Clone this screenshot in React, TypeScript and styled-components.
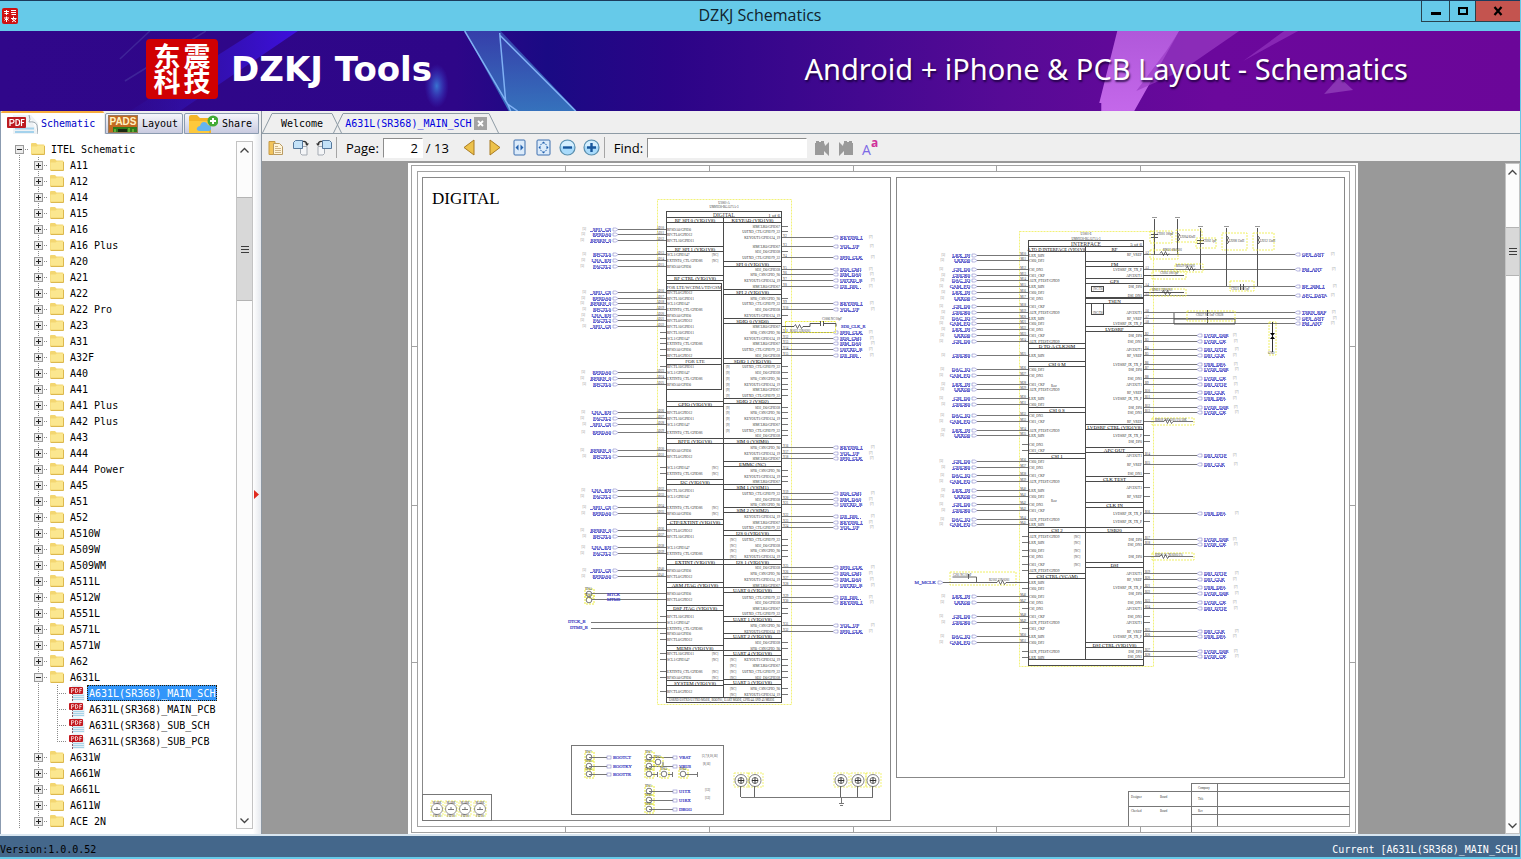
import React, { useState } from "react";
import styled, { createGlobalStyle, css } from "styled-components";

const mono = `"DejaVu Sans Mono", "Liberation Mono", monospace`;
const ui = `"Open Sans", "Noto Sans", sans-serif`;

const GlobalStyle = createGlobalStyle`
  * { box-sizing: border-box; }
  body { margin: 0; font-family: ${mono}; font-size: 10px; color: #000; background: #66cae9; }
  button { font: inherit; color: inherit; padding: 0; margin: 0; border: 0; background: none; cursor: default; }
  svg { display: block; flex: none; }
`;

/* ---------- window frame ---------- */

const Window = styled.div`
  display: flex;
  flex-direction: column;
  height: 100vh;
  border-right: 1px solid #66cae9;
  border-bottom: 2px solid #66cae9;
  overflow: hidden;
`;

const TitleBar = styled.header`
  display: grid;
  grid-template-columns: 1fr auto 1fr;
  flex: none;
  height: 31px;
  border-top: 1px solid #1b3b5c;
  background: #66cae9;
`;

const AppIcon = styled.div`
  align-self: center;
  width: 16px;
  height: 16px;
  margin-left: 2px;
`;

const Title = styled.h1`
  margin: 0;
  font: 400 16px/29px ${ui};
  color: #10222c;
`;

const WindowButtons = styled.div`
  display: flex;
  justify-self: end;
  height: 21px;
`;

const WindowButton = styled.button<{ $w: number; $close?: boolean }>`
  display: grid;
  place-items: center;
  width: ${(p) => p.$w}px;
  height: 21px;
  border: 1px solid #28414c;
  border-top: 0;
  border-right: 0;
  background: ${(p) => (p.$close ? "#c4544f" : "transparent")};
`;

/* ---------- banner ---------- */

const Banner = styled.div`
  display: grid;
  flex: none;
  height: 80px;
  background: linear-gradient(90deg, #30078a 0%, #2e0688 30%, #1a0a84 36%, #2b0487 44%, #3a078d 52%, #560a96 66%, #6b089c 80%, #6b0699 100%);
  overflow: hidden;
  > * { grid-area: 1 / 1; }
  > svg { width: 100%; height: 80px; }
`;

const BannerContent = styled.div`
  display: flex;
  align-items: center;
  justify-content: space-between;
  padding: 0 112px 4px 146px;
`;

const Brand = styled.div`
  display: flex;
  align-items: center;
  gap: 13px;
  color: #fff;
  font: 700 34px/40px "DejaVu Sans", sans-serif;
`;

const Seal = styled.div`
  display: grid;
  grid-template-columns: 30px 30px;
  align-content: center;
  justify-content: center;
  width: 72px;
  height: 60px;
  padding-bottom: 2px;
  border-radius: 4px;
  background: #d00002;
  font: 700 27px/25px "Noto Sans CJK SC", sans-serif;
  text-align: center;
`;

const Slogan = styled.p`
  margin: 0;
  color: #fff;
  font: 400 29px/36px "Noto Sans", sans-serif;
  text-shadow: 1px 2px 2px rgba(20, 0, 50, 0.8);
  white-space: nowrap;
`;

/* ---------- body columns ---------- */

const Body = styled.main`
  display: flex;
  flex: 1;
  min-height: 0;
  background: #efefef;
`;

const Sidebar = styled.aside`
  display: flex;
  flex: none;
  flex-direction: column;
  width: 253px;
  border-left: 1px solid #8b9bb0;
  background: #fff;
`;

const SideTabs = styled.nav`
  display: flex;
  flex: none;
  align-items: flex-end;
  gap: 1px;
  width: 260px;
  height: 23px;
  background: #efefef;
  z-index: 1;
`;

const SideTab = styled.button<{ $active?: boolean; $w: number }>`
  display: flex;
  align-items: center;
  gap: 4px;
  width: ${(p) => p.$w}px;
  height: 21px;
  padding-left: 2px;
  border: 1px solid #8b9bb0;
  border-radius: 2px 2px 0 0;
  background: linear-gradient(#f6f6fb, #c9cbe0);
  ${(p) =>
    p.$active &&
    css`
      height: 23px;
      border: 0;
      border-top: 2px solid #f6ab3c;
      background: #fff;
      color: #0000c8;
      padding-left: 6px;
      gap: 3px;
    `}
`;

const TreePane = styled.div`
  display: flex;
  flex: 1;
  min-height: 0;
  padding: 7px 0 5px 0;
`;

const Tree = styled.ul`
  flex: 1;
  min-width: 0;
  margin: 0;
  padding: 0 0 0 9px;
  list-style: none;
  overflow: hidden;
`;

const TreeRow = styled.li`
  display: flex;
  align-items: center;
  height: 16px;
  white-space: nowrap;
`;

const dotsV = "repeating-linear-gradient(180deg, #8a8a8a 0 1px, transparent 1px 2px)";
const dotsH = "repeating-linear-gradient(90deg, #8a8a8a 0 1px, transparent 1px 2px)";

const Guide = styled.span<{ $line?: boolean; $branch?: boolean; $half?: "top" | "bottom" }>`
  display: grid;
  place-items: center;
  flex: none;
  width: 19px;
  height: 16px;
  background-image: ${(p) => (p.$line ? dotsV : "none")}, ${(p) => (p.$branch ? dotsH : "none")};
  background-size: 1px ${(p) => (p.$half ? "8px" : "16px")}, 10px 1px;
  background-position: 9px ${(p) => (p.$half === "bottom" ? "8px" : "0")}, 9px 8px;
  background-repeat: no-repeat;
`;

const Expander = styled.button`
  width: 9px;
  height: 9px;
  background: #f0f0f0;
`;

const NodeIcon = styled.span`
  flex: none;
  width: 18px;
  height: 16px;
  padding-left: 2px;
  svg { overflow: visible; }
`;

const NodeLabel = styled.button<{ $selected?: boolean }>`
  height: 16px;
  margin-left: 2px;
  padding: 1px 1px 0;
  border: 1px dotted ${(p) => (p.$selected ? "#2b1b00" : "transparent")};
  background: ${(p) => (p.$selected ? "#3296fa" : "transparent")};
  color: ${(p) => (p.$selected ? "#fff" : "#000")};
  line-height: 13px;
`;

const ScrollTrack = styled.div<{ $w: number }>`
  display: flex;
  flex: none;
  flex-direction: column;
  width: ${(p) => p.$w}px;
  border: 1px solid #c3c3c3;
  background: #fcfcfc;
`;

const ScrollArrow = styled.button`
  display: grid;
  place-items: center;
  flex: none;
  height: 15px;
`;

const ScrollThumb = styled.div<{ $top: number; $h: number }>`
  display: grid;
  place-items: center;
  flex: none;
  height: ${(p) => p.$h}px;
  margin-top: ${(p) => p.$top}px;
  border: 1px solid #b4b4b4;
  border-width: 1px 0;
  background: #d8d8d8;
`;

const Spacer = styled.div`
  flex: 1;
`;

const Splitter = styled.div`
  display: flex;
  align-items: center;
  flex: none;
  width: 9px;
  padding: 44px 0 0 1px;
  border-right: 1px solid #8e98a2;
  background: linear-gradient(90deg, #fff, #e6e9ee);
`;

const Workspace = styled.section`
  display: flex;
  flex: 1;
  flex-direction: column;
  min-width: 0;
`;

const DocTabs = styled.nav`
  display: flex;
  align-items: flex-end;
  flex: none;
  height: 23px;
  border-bottom: 1px solid #8e9ba5;
`;

const DocTab = styled.button<{ $active?: boolean }>`
  display: flex;
  align-items: flex-end;
  height: 20px;
  margin-right: -9px;
  color: ${(p) => (p.$active ? "#0000e0" : "#000")};
`;

const DocTabFace = styled.span<{ $pad: number }>`
  display: flex;
  align-items: center;
  gap: 2px;
  height: 20px;
  padding: 0 ${(p) => p.$pad}px;
  border-top: 1px solid #8e9ba5;
`;

const Toolbar = styled.div`
  display: flex;
  align-items: center;
  flex: none;
  height: 29px;
  padding-left: 2px;
  border-bottom: 2px solid #999;
  font: 400 13px/20px ${ui};
`;

const Tool = styled.button`
  display: grid;
  place-items: center;
  width: 24px;
  height: 24px;
`;

const WideTool = styled(Tool)`
  width: 26px;
`;

const Divider = styled.span`
  width: 1px;
  height: 21px;
  margin-right: 9px;
  background: #a5a5a5;
`;

const Field = styled.input<{ $w: number }>`
  width: ${(p) => p.$w}px;
  height: 20px;
  margin: 0 3px 0 4px;
  padding: 0 4px;
  border: 1px solid #8d8d8d;
  border-right-color: #fff;
  border-bottom-color: #fff;
  background: #fff;
  font: inherit;
  text-align: ${(p) => (p.$w < 60 ? "right" : "left")};
  outline: none;
`;

const PageCount = styled.span`
  width: 30px;
`;

const Viewer = styled.div`
  display: flex;
  flex: 1;
  min-height: 0;
  background: #999;
`;

const PageArea = styled.div`
  display: flex;
  justify-content: center;
  flex: 1;
  min-width: 0;
  padding-right: 2px;
  overflow: hidden;
`;

const StatusBar = styled.footer`
  display: flex;
  align-items: flex-end;
  justify-content: space-between;
  flex: none;
  height: 23px;
  padding-right: 1px;
  border-top: 2px solid #d9e6f0;
  background: #44678b;
  line-height: 15px;
`;

const StatusRight = styled.span`
  color: #fff;
`;

/* ---------- icons ---------- */

const SealIcon = () => (
  <svg width="16" height="16" viewBox="0 0 16 16">
    <rect width="16" height="16" rx="2" fill="#cf1111" />
    <path d="M2 3.500h5M4.500 2v5M2.500 5.500h4M9 2.500h5M9 4.500h5M9.500 6.500h4.500M2 10h5M4.500 8.500v5.500M2.500 12.500l2-2 2 2M9 10.500h5.500M11.500 8.500v3M10 14l4-3M10 11l4 3" stroke="#fff" strokeWidth="1" fill="none" />
  </svg>
);

const FolderIcon = () => (
  <svg width="14" height="16" viewBox="0 0 14 16">
    <path d="M0 3q0-1 1-1h4l1.500 1.500H12.500q1 0 1 1V13H0z" fill="#f3d671" />
    <path d="M.5 12.500V5.500H5.500L7 4.500h6.500v8z" fill="#fbe78f" />
    <path d="M.5 13.500H13.500V5" stroke="#dcb84e" fill="none" />
  </svg>
);

const PdfIcon = () => (
  <svg width="16" height="16" viewBox="0 0 16 16">
    <path d="M3 .5h8.500L15.500 5v10.500H3z" fill="#e4eef4" />
    <path d="M4 10.500h11M4 12.500h11M4 14.500h11" stroke="#a7d3e8" />
    <path d="M3.500 8v8" stroke="#8c5a66" strokeDasharray="2 1" />
    <rect x="0" y="2" width="14" height="7" rx="1" fill="#c3191f" />
    <path d="M2.500 8V3.500h1.200q1.200 0 1.200 1.100T3.700 5.800H2.500M6.500 3.500V7.500h.8q1.500 0 1.500-2t-1.500-2zM10.800 8V3.500h2.200M10.800 5.500h1.700" stroke="#f6d5d5" strokeWidth=".9" fill="none" />
  </svg>
);

const PdfLarge = () => (
  <svg width="31" height="20" viewBox="0 0 31 20">
    <path d="M6 1h18l7 8v11H6z" fill="#eef2f5" />
    <path d="M22 1q2 5 0 7q6-1 8 3l1 9" fill="#fafcfd" stroke="#9aa5ad" />
    <path d="M8 14.500h19M8 18h19" stroke="#a4d2ec" strokeWidth="2" />
    <rect x="0" y="3" width="19" height="11" rx="1" fill="#bd1a20" />
    <path d="M3 12V5.500h2q2 0 2 1.800T5 9.200H3M9 5.500V11.500h1.200q2.500 0 2.500-3t-2.500-3zM14.500 12V5.500h3M14.500 8.500h2.500" stroke="#fff" strokeWidth="1.200" fill="none" />
  </svg>
);

const PadsBadge = styled.span`
  display: flex;
  flex-direction: column;
  width: 30px;
  height: 18px;
  border: 1px solid #9a7a5a;
  background: #c46a22;
  color: #fff3c4;
  font: 700 10px/11px "Liberation Sans", sans-serif;
  text-align: center;
  overflow: hidden;
`;

const PadsIcon = () => (
  <PadsBadge>
    PADS
    <svg width="28" height="7" viewBox="0 0 28 7">
      <rect width="28" height="7" fill="#2f7a1c" />
      <path d="M0 0h4v7H0z" fill="#c46a22" />
      <path d="M9 2h9v5H9z" fill="#1c2a12" />
      <path d="M20 1v5M24 2v4M6 2v4" stroke="#8fe04a" />
    </svg>
  </PadsBadge>
);

const ShareIcon = () => (
  <svg width="31" height="18" viewBox="0 0 31 18">
    <path d="M2 2q0-2 2-2h6l3 3h9q2 0 2 2v13H2z" fill="#f4b427" />
    <path d="M2 6h20v12H2z" fill="#fdc93c" />
    <path d="M12 16q-3-1-2-3t3-2q1-4 4-4t4 3q3 0 3 3t-2 3z" fill="#64b4ee" />
    <circle cx="26" cy="6" r="5.500" fill="#43ab36" />
    <path d="M26 3v6M23 6h6" stroke="#fff" strokeWidth="2" />
  </svg>
);

const Chevron = ({ up }: { up?: boolean }) => (
  <svg width="9" height="6" viewBox="0 0 9 6">
    <path d={up ? "M.5 5.500L4.500 1.500 8.500 5.500" : "M.5 .5L4.500 4.500 8.500 .5"} stroke="#444" strokeWidth="1.300" fill="none" />
  </svg>
);

const Grip = () => (
  <svg width="8" height="7" viewBox="0 0 8 7">
    <path d="M0 .5h8M0 3.500h8M0 6.500h8" stroke="#3c3c3c" />
  </svg>
);

const CopyIcon = () => (
  <svg width="16" height="16" viewBox="0 0 16 16">
    <path d="M1 1.500h6v13H1z" fill="#f2c45c" stroke="#c69a46" />
    <path d="M5.500 3.500h6l3 3v8h-9z" fill="#fff5da" stroke="#b99a62" />
    <path d="M7 8.500h6M7 10.500h6M7 12.500h6M7 6.500h3" stroke="#ceb488" />
  </svg>
);

const RotateIcon = ({ flip }: { flip?: boolean }) => (
  <svg width="17" height="17" viewBox="0 0 17 17">
    <g transform={flip ? "matrix(-1 0 0 1 17 0)" : undefined}>
      <path d="M8.500 7.500h6.500v8.500H10l-1.500-1.500z" fill="#f4f5f7" stroke="#a5abb3" />
      <path d="M1.500 3.500l2-2h7v8h-9z" fill="#c4e2f8" stroke="#56789c" />
      <path d="M11 2.500q3.500-.5 4 3" stroke="#333" strokeWidth="1.200" fill="none" />
      <path d="M13 4.500h4l-2 2.500z" fill="#333" />
    </g>
  </svg>
);

const ArrowIcon = ({ right }: { right?: boolean }) => (
  <svg width="12" height="17" viewBox="0 0 12 17">
    <path d={right ? "M1 1L11 8.500 1 16z" : "M11 1L1 8.500 11 16z"} fill="#edc24c" stroke="#a97b22" />
  </svg>
);

const FitIcon = ({ full }: { full?: boolean }) => (
  <svg width="15" height="17" viewBox="0 0 15 17">
    <rect x={full ? 1 : 2} y="1" width={full ? 13 : 11} height="15" rx="1" fill="#dcebfa" stroke="#3d6fae" />
    {!full && <path d="M6.500 5.500L3.500 8.500l3 3zM8.500 5.500l3 3-3 3z" fill="#2462ae" />}
    {full && <path d="M5.500 4.500h4l-2-2zM5.500 12.500h4l-2 2zM4.500 6.500v4l-2-2zM10.500 6.500v4l2-2z" fill="#2462ae" />}
    {full && <path d="M4.500 5.500h1M9.500 5.500h1M4.500 11.500h1M9.500 11.500h1" stroke="#2462ae" />}
  </svg>
);

const ZoomIcon = ({ plus }: { plus?: boolean }) => (
  <svg width="17" height="17" viewBox="0 0 17 17">
    <circle cx="8.500" cy="8.500" r="7.500" fill="#a9dbfb" stroke="#5a8fae" strokeWidth="1.200" />
    <path d="M2 7q1-5 6.500-5T15 7q-6 3-13 0" fill="#d5effe" />
    <path d={plus ? "M4 8.500h9M8.500 4v9" : "M4 8.500h9"} stroke="#17579c" strokeWidth="2.400" />
  </svg>
);

const FindIcon = ({ next }: { next?: boolean }) => (
  <svg width="16" height="16" viewBox="0 0 16 16">
    <path d="M1 3h1V1h3v1h2V1h3v2q1 1 1 3l4-4v14l-5-5v4H1z" fill="#9a9a9a" transform={next ? "matrix(-1 0 0 1 16 0)" : undefined} />
  </svg>
);

const CaseMark = styled.span`
  display: flex;
  height: 18px;
  color: #7d6ae6;
  font: 400 14px/21px "Open Sans", sans-serif;
  sup { color: #d0309a; font: 700 12px/8px "Open Sans", sans-serif; }
`;

const CloseMark = () => (
  <svg width="13" height="13" viewBox="0 0 13 13">
    <rect width="13" height="13" fill="#a3a3a3" />
    <path d="M4 4l5 5M9 4l-5 5" stroke="#fff" strokeWidth="1.800" />
  </svg>
);

const Slant = ({ down }: { down?: boolean }) => (
  <svg width="10" height="20" viewBox="0 0 10 20">
    <path d={down ? "M0 .5L9.500 20" : "M.5 20L10 .5"} stroke="#8e9ba5" fill="none" />
  </svg>
);

const BannerArt = () => (
  <svg viewBox="0 0 1521 80" preserveAspectRatio="none" aria-hidden="true">
    <defs>
      <linearGradient id="beam" x1="0" x2="1">
        <stop offset="0" stopColor="#2c1fbd" stopOpacity=".1" />
        <stop offset="1" stopColor="#4010e8" stopOpacity=".9" />
      </linearGradient>
      <linearGradient id="shard" x1="0" x2="0" y1="0" y2="1">
        <stop offset="0" stopColor="#3848b0" />
        <stop offset="1" stopColor="#3a84c6" />
      </linearGradient>
      <linearGradient id="pink" x1="0" x2="0" y1="0" y2="1">
        <stop offset="0" stopColor="#b058da" />
        <stop offset="1" stopColor="#c468ea" />
      </linearGradient>
      <radialGradient id="glow">
        <stop offset="0" stopColor="#3a80d8" stopOpacity=".9" />
        <stop offset="1" stopColor="#3a40d8" stopOpacity="0" />
      </radialGradient>
    </defs>
    <path d="M256 0h42L180 80H130z" fill="url(#beam)" />
    <path d="M206 0L125 50M150 0l-30 28" stroke="#5b5ab4" strokeWidth="1.500" opacity=".35" />
    <ellipse cx="437" cy="55" rx="12" ry="22" fill="url(#glow)" />
    <path d="M465 0h36l76 80h-68z" fill="url(#shard)" opacity=".85" />
    <path d="M465 0l43 73 3 7M500 4l76 76M500 2l6 68M508 73l10 7" stroke="#7fb0f4" strokeWidth="1.500" fill="none" />
    <path d="M1118 0h62l-45 80h-33v-8h-2z" fill="url(#pink)" />
    <path d="M1180 0h60l-58 40-45 20 30-40z" fill="#9a3cc4" opacity=".7" />
    <path d="M1285 0h14l-55 30z" fill="#9a3cc4" opacity=".6" />
    <path d="M1340 46l14 13-29 4z" fill="#8a34b4" />
  </svg>
);

/* ---------- schematic sheet ---------- */

const INK = "#4a4a4a";
const BLUE = "#3f3fc4";
const YEL = "#ecec3c";

type Header = [number, string];

interface Wire {
  y: number;
  name: string;
}

const Tiny = ({ x, y, children, fill = "#333", size = 4, end, mid }: { x: number; y: number; children: React.ReactNode; fill?: string; size?: number; end?: boolean; mid?: boolean }) => (
  <text x={x} y={y} fill={fill} fontSize={size} textAnchor={end ? "end" : mid ? "middle" : "start"} stroke={fill === BLUE ? BLUE : undefined} strokeWidth=".2">
    {children}
  </text>
);

const wires = (names: string, ys: number[]): Wire[] => {
  const list = names.split(" ");
  return ys.map((y, i) => ({ y, name: list[i % list.length] }));
};

const LeftWires = ({ items, edge, tip, pins }: { items: Wire[]; edge: number; tip: number; pins: string }) => (
  <g>
    {items.map(({ y, name }, i) => (
      <g key={y}>
        <path d={`M${edge} ${y + 0.5}H${tip}`} stroke="#777" />
        <path d={`M${tip - 5} ${y - 1}h3l2 1.500-2 1.500h-3z`} fill="#fff" stroke="#8888cc" strokeWidth=".6" />
        <Tiny x={tip - 7} y={y + 2} fill={BLUE} size={5} end>{name}</Tiny>
        <path d={`M${tip - 7 - name.length * 3} ${y + 2.5}H${tip - 7}`} stroke={BLUE} strokeWidth=".8" strokeDasharray="3 1" />
        <Tiny x={tip - 32 - (i % 3)} y={y + 1} fill="#777" size={3} end>[5]</Tiny>
      </g>
    ))}
    {items.map(({ y }, i) => (
      <Tiny key={y} x={edge - 2} y={y} size={3} end>{pins + (10 + i)}</Tiny>
    ))}
  </g>
);

const RightWires = ({ items, edge, tip, pins }: { items: Wire[]; edge: number; tip: number; pins: string }) => (
  <g>
    {items.map(({ y, name }, i) => (
      <g key={y}>
        <path d={`M${edge} ${y + 0.5}H${tip}`} stroke="#777" />
        <path d={`M${tip + 5} ${y - 1}h-3l-2 1.500 2 1.500h3z`} fill="#fff" stroke="#8888cc" strokeWidth=".6" />
        <Tiny x={tip + 7} y={y + 2} fill={BLUE} size={5}>{name}</Tiny>
        <path d={`M${tip + 7} ${y + 2.5}h${name.length * 3}`} stroke={BLUE} strokeWidth=".8" strokeDasharray="3 1" />
        <Tiny x={tip + 36 + (i % 3)} y={y + 1} fill="#777" size={3}>[7]</Tiny>
        <Tiny x={edge + 1} y={y} size={3}>{pins + (i + 2)}</Tiny>
      </g>
    ))}
  </g>
);

const PinNames = ({ ys, x, end, names, edge }: { ys: number[]; x: number; end?: boolean; names: string; edge: number }) => {
  const list = names.split(" ");
  return (
    <g>
      {ys.map((y, i) => (
        <g key={y}>
          <Tiny x={x} y={y + 2} size={3.5} end={end}>{list[i % list.length]}</Tiny>
          <path d={`M${edge} ${y + 0.5}h${end ? 6 : -6}`} stroke="#777" />
        </g>
      ))}
    </g>
  );
};

const Headers = ({ items, x, w }: { items: Header[]; x: number; w: number }) => (
  <g>
    {items.map(([y, label]) => (
      <g key={label}>
        <rect x={x} y={y - 2.5} width={w} height="5" fill="#fff" stroke={INK} />
        <Tiny x={x + w / 2} y={y + 2} size={label.length > 20 ? 4.5 : 5} fill="#000" mid>{label}</Tiny>
      </g>
    ))}
  </g>
);

const Resistor = ({ x, y }: { x: number; y: number }) => (
  <path d={`M${x} ${y}l1.500-2 2 4 2-4 2 4 1.500-2`} stroke="#333" strokeWidth=".7" fill="none" />
);

const chip1Left: Header[] = [
  [220, "RF SPI 0 (VIO1V8)"], [249, "RF SPI 1 (VIO1V8)"], [278, "RF CTRL (VIO1V8)"],
  [404, "GPIO (VIO1V8)"], [441, "RFFE (VIO1V8)"], [482, "I2C (VIO1V8)"], [522, "CTP/EXTINT (VIO1V8)"],
  [562, "EXTINT (VIO1V8)"], [585, "ARM JTAG (VIO1V8)"], [608, "DSP JTAG (VIO1V8)"], [648, "MEMS (VIO1V8)"], [683, "SYSTEM (VIO1V8)"],
];
const chip1Right: Header[] = [
  [220, "KEYPAD (VIO1V8)"], [264, "SPI 0 (VIO1V8)"], [292, "SPI 2 (VIO1V8)"], [321, "SDIO 0 (VSD0)"], [361, "SDIO 1 (VIO1V8)"],
  [401, "SDIO 2 (VSD2)"], [441, "SIM 0 (VSIM0)"], [464, "EMMC (NC)"], [487, "SIM 1 (VSIM1)"], [510, "SIM 2 (VSIM2)"],
  [533, "I2S 0 (VIO1V8)"], [562, "I2S 1 (VIO1V8)"], [590, "UART 0 (VIO1V8)"], [619, "UART 1 (VIO1V8)"], [636, "UART 2 (VIO1V8)"],
  [653, "UART 4 (VIO1V8)"], [682, "UART 5 (VIO1V8)"],
];
const chip2Left: Header[] = [
  [249, "A TO D INTERFACE (VIO1V8)"], [346, "D TO A CLK26M"], [364, "CSI 0 M"], [410, "CSI 0 S"], [456, "CSI 1"], [530, "CSI 2"], [576, "CSI CTRL (VCAM)"],
];
const chip2Right: Header[] = [
  [249, "RF"], [264, "FM"], [281, "GPS"], [301, "TSEN"], [329, "LVDSRF"], [427, "LVDSRF CTRL (VIO1V8)"], [450, "APC OUT"],
  [479, "CLK TEST"], [505, "CLK IN"], [530, "USB20"], [565, "DSI"], [645, "DSI CTRL (VIO1V8)"],
];

const c1LeftWired = [229, 234, 240, 254, 260, 266, 292, 298, 303, 309, 315, 320, 326, 372, 378, 384, 412, 418, 424, 432, 450, 456, 490, 496, 507, 513, 530, 536, 547, 553, 570, 576];
const c1LeftOpen = [332, 338, 343, 349, 355, 366, 467, 473, 593, 599, 616, 622, 628, 633, 639, 653, 659, 671, 677, 691];
const c1RightWired = [237, 246, 257, 269, 274, 280, 286, 303, 309, 332, 338, 343, 349, 355, 447, 453, 458, 493, 499, 504, 516, 522, 527, 567, 573, 579, 585, 597, 602, 625, 631];
const c1RightOpen = [226, 231, 251, 298, 315, 326, 366, 372, 378, 384, 389, 395, 407, 412, 418, 424, 430, 435, 470, 476, 481, 539, 545, 550, 556, 608, 613, 642, 648, 659, 665, 671, 677, 688, 694];
const c2LeftWired = [255, 260, 269, 275, 280, 286, 292, 298, 306, 312, 318, 323, 329, 335, 341, 355, 369, 375, 384, 389, 398, 404, 415, 421, 430, 435, 461, 467, 475, 481, 490, 496, 504, 510, 519, 524, 596, 602, 616, 622, 636, 642];
const c2LeftOpen = [444, 450, 536, 542, 550, 556, 564, 570, 582, 588, 608, 628, 651, 657];
const c2RightLong = [254, 269, 286, 295, 312, 318, 323];
const c2RightWired = [335, 341, 349, 355, 364, 369, 378, 384, 392, 398, 407, 412, 455, 464, 513, 539, 544, 573, 579, 587, 593, 602, 608, 631, 636, 651, 656];
const c2RightOpen = [275, 421, 435, 441, 473, 487, 496, 521, 556, 616, 622];

const TestPoint = ({ x, y, to, name }: { x: number; y: number; to?: number; name?: string }) => (
  <g>
    <rect x={x - 4} y={y - 5} width="9" height="9" fill="none" stroke={YEL} strokeDasharray="2 1" />
    <circle cx={x} cy={y} r="2.800" fill="none" stroke="#444" strokeWidth=".7" />
    <Tiny x={x - 4} y={y - 4} size={3}>TP0{y % 10}</Tiny>
    {to && (
      <>
        <path d={`M${x} ${y + 0.5}H${to}`} stroke="#777" />
        <rect x={to} y={y - 1} width="4" height="3" fill="#fff" stroke="#8888cc" strokeWidth=".6" />
        <Tiny x={to + 6} y={y + 1.5} size={4.5} fill={BLUE}>{name}</Tiny>
      </>
    )}
  </g>
);

const Screw = ({ x }: { x: number }) => (
  <g fill="none" stroke="#333">
    <rect x={x - 7} y="773" width="15" height="14" stroke={YEL} strokeDasharray="2 1" strokeWidth=".7" />
    <circle cx={x} cy="780.500" r="6" strokeWidth=".6" />
    <circle cx={x} cy="780.500" r="3" strokeWidth=".7" />
    <path d={`M${x - 3} 780.500h6M${x} 777.500v6`} />
    <path d={`M${x - 0.5} 786V797`} stroke="#666" />
  </g>
);

const Sheet = () => (
  <svg width="950" height="671" viewBox="408 163 950 671" fontFamily="'Liberation Serif', serif" role="img" aria-label="Schematic page 2">
    <rect x="408" y="163" width="950" height="671" fill="#fff" />
    <g fill="none" stroke="#a2a2a2">
      <rect x="411.500" y="165.500" width="944" height="667" />
      <rect x="417.500" y="171.500" width="932" height="655" />
      <path d="M565.500 166v6M709.500 166v6M853.500 166v6M996.500 166v6M1140.500 166v6M565.500 827v6M709.500 827v6M853.500 827v6M996.500 827v6M1140.500 827v6M411 346.500h6M411 505.500h6M411 662.500h6M1350 346.500h6M1350 505.500h6M1350 662.500h6" />
      <rect x="422.500" y="177.500" width="468" height="643" stroke="#888" />
      <rect x="896.500" y="177.500" width="448" height="600" stroke="#888" />
    </g>
    <text x="432" y="204" fontSize="17" fill="#000">DIGITAL</text>

    {/* baseband, part 1 */}
    <rect x="657.500" y="199.500" width="134" height="505" fill="none" stroke={YEL} strokeDasharray="2 1" strokeWidth=".7" />
    <Tiny x={724} y={204} size={3} mid>U1001-A</Tiny>
    <Tiny x={724} y={208} size={3} mid>UMS9230-BGA571A-3</Tiny>
    <LeftWires items={wires("SPI1_CS RFSDA0 RFSEN_0 RFCTL5 LNA_EN PACTL2", c1LeftWired)} edge={666} tip={618} pins="AD" />
    <RightWires items={wires("KEYIN0_I VOL_UP SPI0_CLK SD0_CM1 SIM_DA0 U0TXD_B I2S_DI0", c1RightWired)} edge={782} tip={833} pins="Y" />
    <g shapeRendering="crispEdges" fill="none" stroke={INK}>
      <rect x="666.500" y="211.500" width="115" height="491" />
      <path d="M666 217.500h115M723.500 217v480M666 697.500h115M666 283.500h55v106h-55M666 290.500h55M666 358.500h55M666 364.500h55" />
    </g>
    <Tiny x={724} y={216.5} size={5.5} mid>DIGITAL</Tiny>
    <Tiny x={780} y={216.5} size={5} end>1 of 6</Tiny>
    <PinNames ys={[...c1LeftWired, ...c1LeftOpen]} x={667} edge={666} names="RFSDA0/GPIO0 RFCTL0/GPIO12 RFCTL10/GPIO11 SCL1/GPIO147 EXTINT0_CTL/GPIO86" />
    <PinNames ys={[...c1RightWired, ...c1RightOpen]} x={780} edge={782} end names="KEYOUT1/GPIO124_19 SIMCLK0/GPIO67 U0TXD_CTL/GPIO79_22 SD2_D0/GPIO38 SPI0_CSN/GPIO_90" />
    <Headers items={chip1Left} x={666.5} w={57} />
    <Headers items={chip1Right} x={723.5} w={58} />
    <Tiny x={694} y={289} size={4.5} mid>FOR LTE/WCDMA/TD/GSM</Tiny>
    <Tiny x={695} y={363} size={5} mid>FOR LTE</Tiny>
    {[366, 372, 378, 384, 389, 395, 407, 412, 418, 424, 430].map((y) => (
      <Tiny key={y} x={726} y={y + 2} size={3}>[9]</Tiny>
    ))}
    {[539, 545, 550, 556, 659, 665, 671, 677, 688, 694].map((y) => (
      <Tiny key={y} x={730} y={y + 2} size={3}>[NC]</Tiny>
    ))}
    {[254, 260, 467, 473, 507, 513, 653, 659, 671, 677].map((y) => (
      <Tiny key={y} x={712} y={y + 2} size={3}>[NC]</Tiny>
    ))}
    <Tiny x={669} y={701} size={3}>U0RXD/U0TXD/U1TXD MODE, BOOT01, UART MODE, GPIO 44 AND 45 MODE</Tiny>
    <rect x="785.500" y="321.500" width="50" height="11" fill="none" stroke={YEL} strokeDasharray="2 1" />
    <path d="M782 326.500h12M803 326.500h7v-3h10M824 323.500h12v3M820.500 321v5M823.500 321v5" fill="none" stroke="#555" />
    <Resistor x={794} y={326.5} />
    <Tiny x={790} y={332} size={3}>R1022 22R/0201</Tiny>
    <Tiny x={822} y={320} size={3}>C1006 NC/10pF</Tiny>
    <Tiny x={841} y={328} size={4.5} fill={BLUE}>SD0_CLK_R</Tiny>
    <TestPoint x={589} y={594} />
    <TestPoint x={589} y={600} />
    <path d="M592 593.500h74M592 599.500h74M591 622.500h75M591 628.500h75" stroke="#777" />
    <Tiny x={607} y={596} size={4.5} fill={BLUE}>MTCK</Tiny>
    <Tiny x={607} y={601} size={4.5} fill={BLUE}>MTMS</Tiny>
    <Tiny x={568} y={623} size={4.5} fill={BLUE}>DTCK_B</Tiny>
    <Tiny x={570} y={629} size={4.5} fill={BLUE}>DTMS_B</Tiny>

    {/* baseband, part 5 */}
    <rect x="1019.500" y="231.500" width="134" height="435" fill="none" stroke={YEL} strokeDasharray="2 1" strokeWidth=".7" />
    <Tiny x={1086} y={235} size={3} mid>U1001-E</Tiny>
    <Tiny x={1086} y={239.5} size={3} mid>UMS9230-BGA571A-3</Tiny>
    <LeftWires items={wires("LRX_IN LRXQ0 CSI_D0 CSICK0 DAC_IQ CAM_PD", c2LeftWired)} edge={1028} tip={977} pins="M" />
    <RightWires items={wires("GPS_ANT FM_ANT RF_26M_I APC_DATA TSEN_REF", c2RightLong)} edge={1144} tip={1295} pins="A" />
    <RightWires items={wires("LVDS_D0R LVDS_CK DSI_DT1P DSI_CLK USB_DPA", c2RightWired)} edge={1144} tip={1197} pins="B" />
    <g shapeRendering="crispEdges" fill="none" stroke={INK}>
      <rect x="1028.500" y="240.500" width="115" height="425" />
      <path d="M1028 246.500h115M1085.500 246v413M1028 659.500h115M1091.500 286.500h12v5h-12zM1091.500 303.500h12v11h-12zM1085 297.500h58" />
    </g>
    <Tiny x={1086} y={245.5} size={5.5} mid>INTERFACE</Tiny>
    <Tiny x={1142} y={245.5} size={5} end>5 of 6</Tiny>
    <PinNames ys={[...c2LeftWired, ...c2LeftOpen]} x={1029} edge={1028} names="LRX_I0IN CSI0_DP2 CSI_DN3 CSI1_CKP AUX_PTEST/GPIO9" />
    <PinNames ys={[...c2RightLong, ...c2RightWired, ...c2RightOpen]} x={1142} edge={1144} end names="RF_VREF LVDSRF_IX_TX_P DSI_DP0 DSI_DN1 APCOUT1" />
    <Headers items={chip2Left} x={1028.5} w={57} />
    <Headers items={chip2Right} x={1085.5} w={58} />
    <Tiny x={1093} y={290} size={3}>[NC/TS]</Tiny>
    <Tiny x={1093} y={314} size={3}>[NC/TS]</Tiny>
    <Tiny x={1051} y={387} size={3}>Rear</Tiny>
    <Tiny x={1051} y={502} size={3}>Rear</Tiny>
    {[536, 542, 550, 556, 564].map((y) => (
      <Tiny key={y} x={1074} y={y + 2} size={3}>[NC]</Tiny>
    ))}

    {/* RF front end */}
    <g fill="none" stroke="#555">
      <path d="M1154.500 219v36M1177.500 219v35M1200.500 228v41M1226.500 228v58M1257.500 228v58" />
      <path d="M1152 217.500h5M1175 217.500h5M1198 226.500h5M1224 226.500h5M1255 226.500h5" stroke="#999" />
      <path d="M1151 234.500h7M1151 237.500h7M1197 240.500h7M1197 243.500h7M1240.500 284v6M1243.500 284v6M1144 275.500h40M1144 292.500h40M1174 313v6h61v5h-61v-5M1207.500 310v6M1207.500 317v6" />
      <path d="M1226.500 236q4 2 0 4q4 2 0 4M1257.500 236q4 2 0 4q4 2 0 4M1177.500 233q4 2 0 4q4 2 0 4" />
    </g>
    <g fill="none" stroke={YEL} strokeDasharray="2 1" strokeWidth=".8">
      <path d="M1150 231h22v12h-22zM1176 230h26v12h-26zM1196 238h20v10h-20zM1222 233h25v17h-25zM1253 233h21v17h-21zM1150 250h28v9h-28zM1175 264h28v8h-28zM1152 271h34v8h-34zM1150 289h36v7h-36zM1230 281h24v10h-24zM1187 311h48v10h-48zM1152 418h42v7h-42zM1152 553h42v7h-42zM950 572h66v13h-66zM1269 322h7v33h-7z" />
    </g>
    <Resistor x={1160} y={253.5} />
    <Resistor x={1186} y={268.5} />
    <Resistor x={1162} y={292.5} />
    <Tiny x={1157} y={235} size={3}>C9201 100pF</Tiny>
    <Tiny x={1180} y={238} size={3}>L9204 82nH</Tiny>
    <Tiny x={1203} y={242} size={3}>C9202 1pF</Tiny>
    <Tiny x={1229} y={242} size={3}>L9208 15nH</Tiny>
    <Tiny x={1260} y={242} size={3}>L9212 15nH</Tiny>
    <Tiny x={1163} y={251} size={3}>R9021 0R/0201</Tiny>
    <Tiny x={1176} y={267} size={3}>R9229 0R/0201</Tiny>
    <Tiny x={1160} y={274} size={3}>C9203 100/1pF</Tiny>
    <Tiny x={1152} y={291} size={3}>R9021 22R/0201</Tiny>
    <Tiny x={1231} y={289.5} size={3}>C9221 100/1pF</Tiny>
    <Tiny x={1196} y={315.5} size={3}>C9227 NC/1nF C9228</Tiny>
    <Tiny x={1155} y={421} size={3}>R9018 33K/0201/1%/50K</Tiny>
    <path d="M1146 421.500h18M1173 421.500h20M1146 556.500h14M1168 556.500h25" stroke="#777" />
    <Resistor x={1164} y={421.5} />
    <Resistor x={1160} y={556.5} />
    <Tiny x={1155} y={556} size={3}>R9020 12.7K/0201/1%</Tiny>
    <path d="M1272.500 322v30" stroke="#333" />
    <path d="M1270 333h5l-5 6h5z" fill="#000" />
    <Tiny x={1268} y={354} size={3}>GND</Tiny>
    <path d="M943 582.500h54M1006 582.500h22M976.500 582v-5h-24M968.500 574v5" stroke="#666" fill="none" />
    <Resistor x={997} y={582.5} />
    <path d="M938 581h3l2 1.500-2 1.500h-3z" fill="#fff" stroke="#8888cc" strokeWidth=".6" />
    <Tiny x={936} y={584} size={5} fill={BLUE} end>M_MCLK</Tiny>
    <Tiny x={953} y={576} size={3}>C201 NC/10pF</Tiny>
    <Tiny x={989} y={581} size={3}>R2102 22R/0201</Tiny>

    {/* test points, screws and fiducials */}
    <rect x="571.500" y="745.500" width="152" height="69" fill="none" stroke="#777" />
    <TestPoint x={589} y={757} to={607} name="BOOTCT" />
    <TestPoint x={589} y={766} to={607} name="BOOTKY" />
    <TestPoint x={589} y={774} to={607} name="BOOTTR" />
    <TestPoint x={649} y={757} to={673} name="VBAT" />
    <TestPoint x={649} y={766} to={673} name="VBUS" />
    <TestPoint x={658} y={762} />
    <TestPoint x={649} y={774} />
    <TestPoint x={664} y={774} />
    <TestPoint x={683} y={774} />
    <path d="M652 774.500h6M668 774.500h4M686 774.500h11M657.500 772v5M672.500 772v5M697.500 772v5M663 762v4" stroke="#777" />
    <TestPoint x={649} y={791} to={673} name="U1TX" />
    <TestPoint x={649} y={800} to={673} name="U1RX" />
    <TestPoint x={649} y={809} to={673} name="DBGG" />
    <Tiny x={702} y={757} size={3}>[3,7,8,10,16]</Tiny>
    <Tiny x={703} y={765} size={3}>[8,16]</Tiny>
    <Tiny x={705} y={791} size={3}>[13]</Tiny>
    <Tiny x={705} y={799} size={3}>[13]</Tiny>
    <rect x="422.500" y="794.500" width="69" height="26" fill="none" stroke="#777" />
    {[437, 451, 465, 480].map((x) => (
      <g key={x}>
        <path d={`M${x - 6} 801h12v15h-12z`} fill="none" stroke={YEL} strokeDasharray="2 1" strokeWidth=".7" />
        <circle cx={x} cy="809" r="5.500" fill="none" stroke="#555" strokeWidth=".6" />
        <path d={`M${x - 3} 809.500h6M${x} 807v3`} stroke="#777" />
        <Tiny x={x} y={804} size={3} mid>MARK</Tiny>
        <Tiny x={x} y={817} size={3} mid>FID10</Tiny>
      </g>
    ))}
    {[741, 755, 841, 858, 873].map((x) => (
      <Screw key={x} x={x} />
    ))}
    <path d="M741 797.500h132M841.500 797v6M839 803.500h5M840 805.500h3" stroke="#777" />

    {/* title block */}
    <path d="M1191.500 783.500h158M1128.500 791.500h221M1128.500 806.500h221M1191.500 814.500h158M1128.500 791v35M1191.500 783v49M1217.500 783v43" fill="none" stroke="#777" />
    <Tiny x={1198} y={789} size={3}>Company</Tiny>
    <Tiny x={1198} y={800} size={3}>Title</Tiny>
    <Tiny x={1198} y={812} size={3}>Rev</Tiny>
    <Tiny x={1131} y={798} size={3}>Designer</Tiny>
    <Tiny x={1160} y={798} size={3}>Board</Tiny>
    <Tiny x={1131} y={812} size={3}>Checked</Tiny>
    <Tiny x={1160} y={812} size={3}>Board</Tiny>
  </svg>
);

/* ---------- tree ---------- */

const before = ["A11", "A12", "A14", "A15", "A16", "A16 Plus", "A20", "A21", "A22", "A22 Pro", "A23", "A31", "A32F", "A40", "A41", "A41 Plus", "A42 Plus", "A43", "A44", "A44 Power", "A45", "A51", "A52", "A510W", "A509W", "A509WM", "A511L", "A512W", "A551L", "A571L", "A571W", "A62"];
const after = ["A631W", "A661W", "A661L", "A611W", "ACE 2N"];
const files = ["A631L(SR368)_MAIN_SCH", "A631L(SR368)_MAIN_PCB", "A631L(SR368)_SUB_SCH", "A631L(SR368)_SUB_PCB"];

const Box = ({ open }: { open?: boolean }) => (
  <Expander aria-label={open ? "Collapse" : "Expand"}>
    <svg width="9" height="9" viewBox="0 0 9 9">
      <rect x=".5" y=".5" width="8" height="8" fill="#ececec" stroke="#9a9a9a" />
      <path d={open ? "M2 4.500h5" : "M2 4.500h5M4.500 2v5"} stroke="#222" />
    </svg>
  </Expander>
);

const FolderRow = ({ name, open }: { name: string; open?: boolean }) => (
  <TreeRow>
    <Guide $line />
    <Guide $line $branch><Box open={open} /></Guide>
    <NodeIcon><FolderIcon /></NodeIcon>
    <NodeLabel>{name}</NodeLabel>
  </TreeRow>
);

export default function App() {
  const [selected, setSelected] = useState(files[0]);
  return (
    <>
      <GlobalStyle />
      <Window>
        <TitleBar>
          <AppIcon><SealIcon /></AppIcon>
          <Title>DZKJ Schematics</Title>
          <WindowButtons>
            <WindowButton $w={28} aria-label="Minimize">
              <svg width="10" height="10" viewBox="0 0 10 10"><path d="M0 7.500h10" stroke="#000" strokeWidth="3" /></svg>
            </WindowButton>
            <WindowButton $w={26} aria-label="Maximize">
              <svg width="10" height="10" viewBox="0 0 10 10"><rect x="1" y="2" width="8" height="6" fill="none" stroke="#000" strokeWidth="2" /></svg>
            </WindowButton>
            <WindowButton $w={45} $close aria-label="Close">
              <svg width="10" height="10" viewBox="0 0 10 10"><path d="M1.500 1l7 8M8.500 1l-7 8" stroke="#000" strokeWidth="2.200" /></svg>
            </WindowButton>
          </WindowButtons>
        </TitleBar>

        <Banner>
          <BannerArt />
          <BannerContent>
            <Brand>
              <Seal><span>东</span><span>震</span><span>科</span><span>技</span></Seal>
              DZKJ Tools
            </Brand>
            <Slogan>Android + iPhone &amp; PCB Layout - Schematics</Slogan>
          </BannerContent>
        </Banner>

        <Body>
          <Sidebar>
            <SideTabs>
              <SideTab $active $w={103}><PdfLarge />Schematic</SideTab>
              <SideTab $w={78}><PadsIcon />Layout</SideTab>
              <SideTab $w={75}><ShareIcon />Share</SideTab>
            </SideTabs>
            <TreePane>
              <Tree>
                <TreeRow>
                  <Guide $line $branch $half="bottom"><Box open /></Guide>
                  <NodeIcon><FolderIcon /></NodeIcon>
                  <NodeLabel>ITEL Schematic</NodeLabel>
                </TreeRow>
                {before.map((n) => <FolderRow key={n} name={n} />)}
                <FolderRow name="A631L" open />
                {files.map((n, i) => (
                  <TreeRow key={n}>
                    <Guide $line />
                    <Guide $line />
                    <Guide $line $branch $half={i === files.length - 1 ? "top" : undefined} />
                    <NodeIcon><PdfIcon /></NodeIcon>
                    <NodeLabel $selected={n === selected} onClick={() => setSelected(n)}>{n}</NodeLabel>
                  </TreeRow>
                ))}
                {after.map((n) => <FolderRow key={n} name={n} />)}
              </Tree>
              <ScrollTrack $w={17}>
                <ScrollArrow aria-label="Scroll up"><Chevron up /></ScrollArrow>
                <ScrollThumb $top={40} $h={104}><Grip /></ScrollThumb>
                <Spacer />
                <ScrollArrow aria-label="Scroll down"><Chevron /></ScrollArrow>
              </ScrollTrack>
            </TreePane>
          </Sidebar>

          <Splitter>
            <svg width="5" height="9" viewBox="0 0 5 9"><path d="M0 0l5 4.500L0 9z" fill="#e02a1e" /></svg>
          </Splitter>

          <Workspace>
            <DocTabs>
              <DocTab>
                <Slant /><DocTabFace $pad={9}>Welcome</DocTabFace><Slant down />
              </DocTab>
              <DocTab $active>
                <Slant /><DocTabFace $pad={2}>A631L(SR368)_MAIN_SCH<CloseMark /></DocTabFace><Slant down />
              </DocTab>
            </DocTabs>
            <Toolbar>
              <Tool aria-label="Copy"><CopyIcon /></Tool>
              <Tool aria-label="Rotate right"><RotateIcon /></Tool>
              <Tool aria-label="Rotate left"><RotateIcon flip /></Tool>
              <Divider />
              <label htmlFor="page">Page:</label>
              <Field id="page" $w={40} defaultValue="2" />
              <PageCount>/ 13</PageCount>
              <WideTool aria-label="Previous page"><ArrowIcon /></WideTool>
              <WideTool aria-label="Next page"><ArrowIcon right /></WideTool>
              <Tool aria-label="Fit width"><FitIcon /></Tool>
              <Tool aria-label="Fit page"><FitIcon full /></Tool>
              <Tool aria-label="Zoom out"><ZoomIcon /></Tool>
              <Tool aria-label="Zoom in"><ZoomIcon plus /></Tool>
              <Divider />
              <label htmlFor="find">Find:</label>
              <Field id="find" $w={160} />
              <Tool aria-label="Find previous"><FindIcon /></Tool>
              <Tool aria-label="Find next"><FindIcon next /></Tool>
              <Tool aria-label="Match case"><CaseMark>A<sup>a</sup></CaseMark></Tool>
            </Toolbar>
            <Viewer>
              <PageArea><Sheet /></PageArea>
              <ScrollTrack $w={15}>
                <ScrollArrow aria-label="Scroll up"><Chevron up /></ScrollArrow>
                <ScrollThumb $top={48} $h={49}><Grip /></ScrollThumb>
                <Spacer />
                <ScrollArrow aria-label="Scroll down"><Chevron /></ScrollArrow>
              </ScrollTrack>
            </Viewer>
          </Workspace>
        </Body>

        <StatusBar>
          <span>Version:1.0.0.52</span>
          <StatusRight>Current [{selected}]</StatusRight>
        </StatusBar>
      </Window>
    </>
  );
}
